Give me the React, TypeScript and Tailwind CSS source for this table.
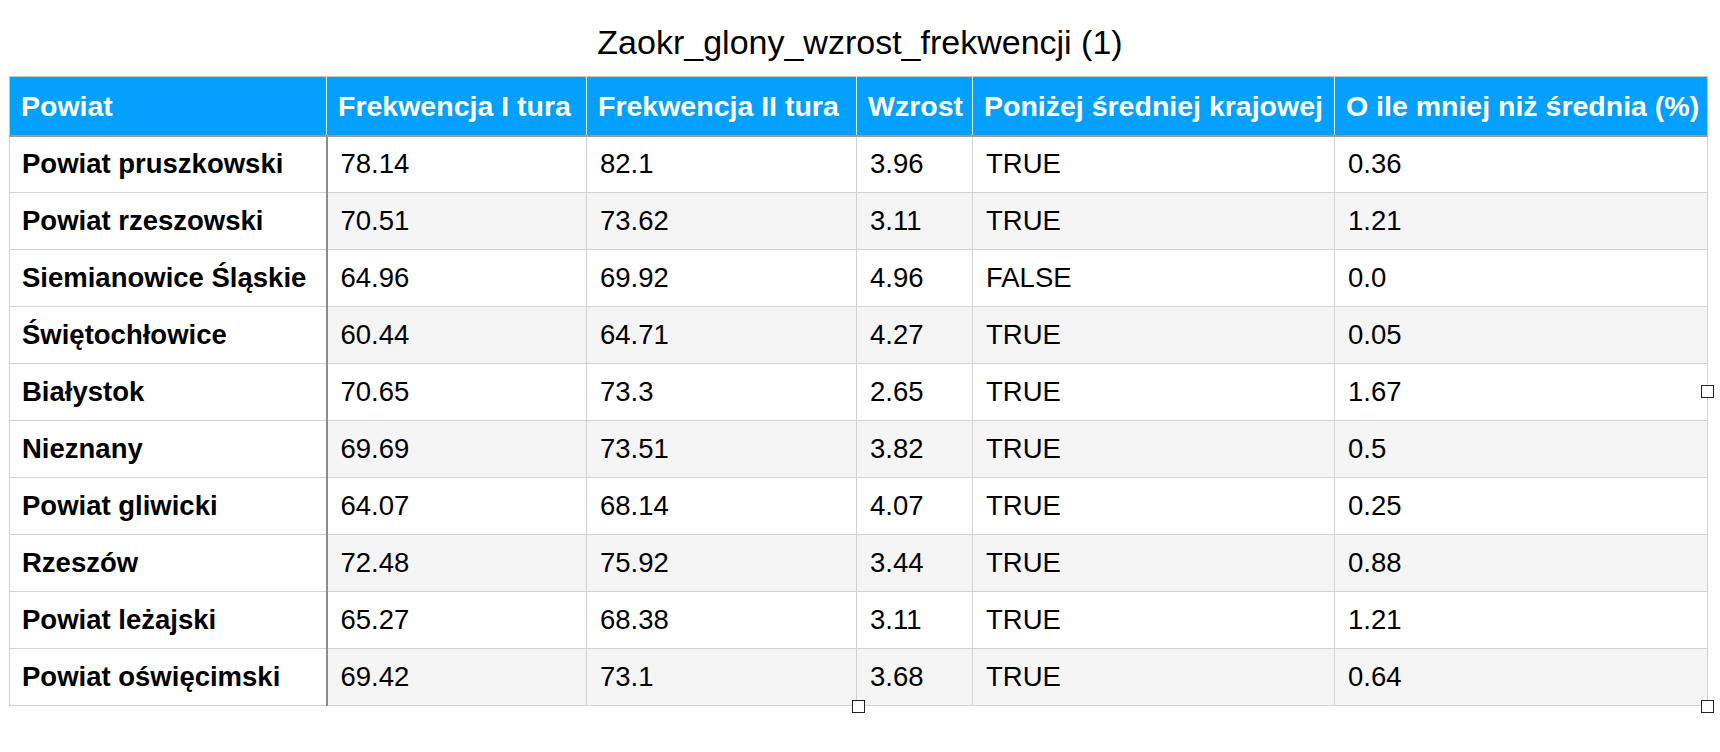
const columns = [
  { label: 'Powiat', width: 'w-[317px]' },
  { label: 'Frekwencja I tura', width: 'w-[260px]' },
  { label: 'Frekwencja II tura', width: 'w-[270px]' },
  { label: 'Wzrost', width: 'w-[116px]' },
  { label: 'Poniżej średniej krajowej', width: 'w-[362px]' },
  { label: 'O ile mniej niż średnia (%)', width: 'w-[373px]' },
];

const rows: string[][] = [
  ['Powiat pruszkowski', '78.14', '82.1', '3.96', 'TRUE', '0.36'],
  ['Powiat rzeszowski', '70.51', '73.62', '3.11', 'TRUE', '1.21'],
  ['Siemianowice Śląskie', '64.96', '69.92', '4.96', 'FALSE', '0.0'],
  ['Świętochłowice', '60.44', '64.71', '4.27', 'TRUE', '0.05'],
  ['Białystok', '70.65', '73.3', '2.65', 'TRUE', '1.67'],
  ['Nieznany', '69.69', '73.51', '3.82', 'TRUE', '0.5'],
  ['Powiat gliwicki', '64.07', '68.14', '4.07', 'TRUE', '0.25'],
  ['Rzeszów', '72.48', '75.92', '3.44', 'TRUE', '0.88'],
  ['Powiat leżajski', '65.27', '68.38', '3.11', 'TRUE', '1.21'],
  ['Powiat oświęcimski', '69.42', '73.1', '3.68', 'TRUE', '0.64'],
];

function Handle({ className }: { className: string }) {
  return <div className={`absolute w-[13px] h-[13px] border-[1.5px] border-[#222] bg-white ${className}`} />;
}

export default function App() {
  return (
    <div className="min-h-screen bg-white font-['Liberation_Sans',Arial,sans-serif] text-black">
      <h1 className="pt-[23px] h-[76px] text-center text-[34px] leading-[38px]">Zaokr_glony_wzrost_frekwencji (1)</h1>
      <div className="relative ml-[9px] w-[1698px]">
        <table className="table-fixed border-collapse w-full text-[27.5px] leading-[32px]">
          <colgroup>
            {columns.map((c) => (
              <col key={c.label} className={c.width} />
            ))}
          </colgroup>
          <thead>
            <tr className="h-[59px] bg-[#03a1fd] text-white">
              {columns.map((c) => (
                <th
                  key={c.label}
                  className="border border-[#d9eefc] border-t-[#c9c9c9] border-b-2 border-b-[#9b9b9b] px-[11px] text-left text-[28.5px] font-bold whitespace-nowrap first:border-l-[#c9c9c9] last:border-r-[#c9c9c9]"
                >
                  {c.label}
                </th>
              ))}
            </tr>
          </thead>
          <tbody>
            {rows.map((r, i) => (
              <tr key={r[0]} className={`h-[57px] ${i % 2 === 1 ? 'bg-[#f5f5f5]' : 'bg-white'}`}>
                {r.map((v, j) =>
                  j === 0 ? (
                    <td
                      key={j}
                      className="border border-[#d2d2d2] border-r-2 border-r-[#8c8c8c] bg-white px-[12px] font-bold whitespace-nowrap"
                    >
                      {v}
                    </td>
                  ) : (
                    <td key={j} className="border border-[#d2d2d2] px-[13px] whitespace-nowrap">
                      {v}
                    </td>
                  ),
                )}
              </tr>
            ))}
          </tbody>
        </table>
        <Handle className="right-[-7px] top-[309px]" />
        <Handle className="right-[-7px] bottom-[-7px]" />
        <Handle className="left-[843px] bottom-[-7px]" />
      </div>
    </div>
  );
}
